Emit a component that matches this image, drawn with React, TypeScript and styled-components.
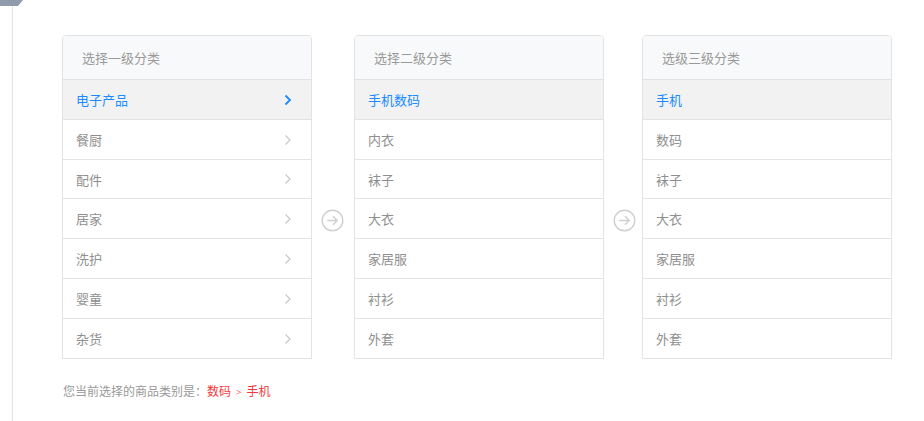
import styled, { createGlobalStyle } from 'styled-components';

const GlobalStyle = createGlobalStyle`
  html, body {
    margin: 0;
    padding: 0;
    background: #fff;
    font-family: "Noto Sans CJK SC", "Noto Sans", sans-serif;
  }
`;

type Column = {
  title: string;
  items: string[];
  active: number;
  chevron?: boolean;
};

const columns: Column[] = [
  {
    title: '选择一级分类',
    items: ['电子产品', '餐厨', '配件', '居家', '洗护', '婴童', '杂货'],
    active: 0,
    chevron: true,
  },
  {
    title: '选择二级分类',
    items: ['手机数码', '内衣', '袜子', '大衣', '家居服', '衬衫', '外套'],
    active: 0,
  },
  {
    title: '选级三级分类',
    items: ['手机', '数码', '袜子', '大衣', '家居服', '衬衫', '外套'],
    active: 0,
  },
];

const Chevron = ({ active }: { active: boolean }) => (
  <svg width="8" height="12" viewBox="0 0 8 12">
    <path
      d="M1.5 1.5 L6 6 L1.5 10.5"
      fill="none"
      stroke={active ? '#1a8cff' : '#c8c8c8'}
      strokeWidth={active ? 1.8 : 1.2}
    />
  </svg>
);

const ArrowCircle = () => (
  <svg width="23" height="23" viewBox="0 0 23 23">
    <circle cx="11.5" cy="11.5" r="10.3" fill="none" stroke="#d0d0d0" strokeWidth="1.4" />
    <path d="M6.2 11.5 H16.2 M12 7.3 L16.2 11.5 L12 15.7" fill="none" stroke="#d0d0d0" strokeWidth="1.4" />
  </svg>
);

const App = () => (
  <>
    <GlobalStyle />
    <Page>
      <Rail>
        <Notch />
      </Rail>
      <Main>
        <Columns>
          {columns.map((col, i) => (
            <Group key={col.title}>
              {i > 0 && (
                <Connector $right={i === 1 ? 10 : 6}>
                  <ArrowCircle />
                </Connector>
              )}
              <Panel>
                <PanelHeader>{col.title}</PanelHeader>
                {col.items.map((item, j) => (
                  <Row key={item} $active={j === col.active}>
                    <span>{item}</span>
                    {col.chevron && <Chevron active={j === col.active} />}
                  </Row>
                ))}
              </Panel>
            </Group>
          ))}
        </Columns>
        <Summary>
          您当前选择的商品类别是：<Picked>数码<Sep>&gt;</Sep>手机</Picked>
        </Summary>
      </Main>
    </Page>
  </>
);

export default App;

const Page = styled.div`
  display: flex;
  min-height: 421px;
`;

const Rail = styled.div`
  position: relative;
  width: 12px;
  flex-shrink: 0;
  border-right: 1px solid #e3e3e3;
`;

const Notch = styled.div`
  width: 23px;
  height: 6px;
  background: #8f9aab;
  clip-path: polygon(0 0, 100% 0, 78% 100%, 0 100%);
`;

const Main = styled.div`
  padding: 35px 0 0 49px;
`;

const Columns = styled.div`
  display: flex;
  align-items: stretch;
`;

const Group = styled.div`
  display: flex;
  align-items: center;
`;

const Connector = styled.div<{ $right: number }>`
  display: flex;
  align-items: center;
  padding: 0 ${({ $right }) => $right}px 0 9px;
  margin-top: 46px;
`;

const Panel = styled.div`
  width: 248px;
  border: 1px solid #e3e3e3;
  border-radius: 4px 4px 0 0;
  overflow: hidden;
`;

const PanelHeader = styled.div`
  height: 43px;
  line-height: 43px;
  padding-left: 19px;
  background: #f8f9fb;
  color: #999;
  font-size: 13px;
  border-bottom: 1px solid #e3e3e3;
`;

const Row = styled.div<{ $active: boolean }>`
  display: flex;
  align-items: center;
  justify-content: space-between;
  height: 39px;
  padding: 0 19px 0 13px;
  font-size: 13px;
  color: ${({ $active }) => ($active ? '#1a8cff' : '#8f8f8f')};
  background: ${({ $active }) => ($active ? '#f2f2f2' : '#fff')};
  border-bottom: 1px solid #e3e3e3;

  &:nth-child(4) {
    height: 38px;
  }

  &:last-child {
    border-bottom: 0;
  }
`;

const Summary = styled.div`
  margin-top: 23px;
  padding-left: 1px;
  font-size: 12px;
  color: #999;
`;

const Picked = styled.span`
  color: #f2383d;
`;

const Sep = styled.span`
  margin: 0 5px;
  font-size: 10px;
  color: #f47a7d;
`;
